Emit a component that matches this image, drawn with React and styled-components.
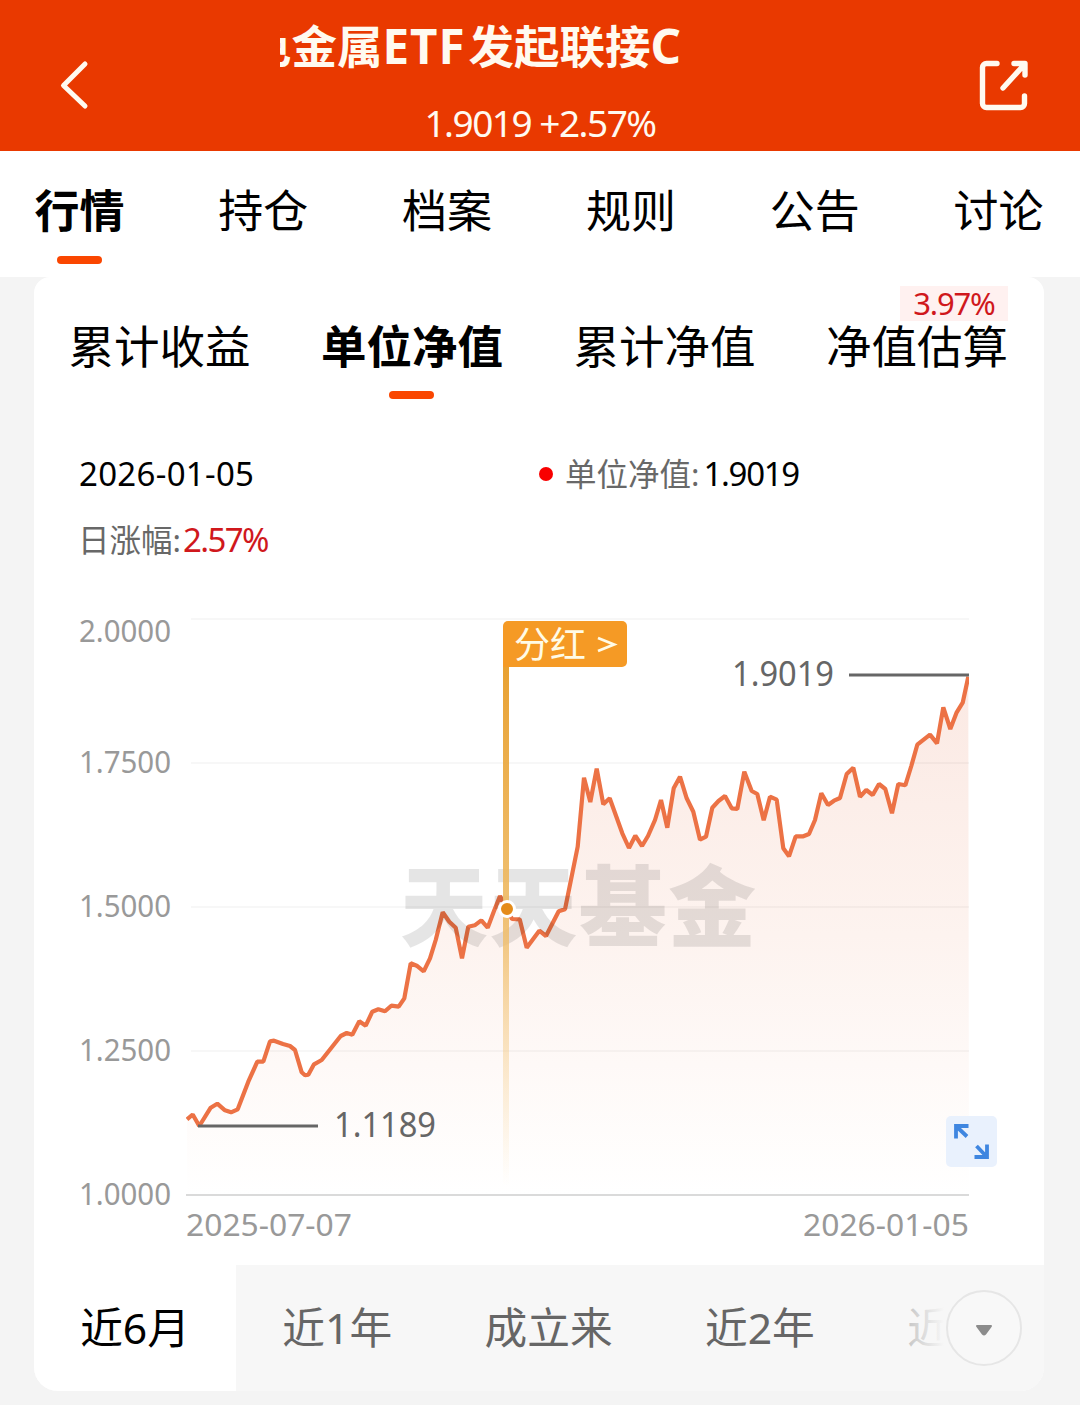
import React, { useState } from 'react';
import styled, { createGlobalStyle, css } from 'styled-components';

const GlobalStyle = createGlobalStyle`
  * {
    box-sizing: border-box;
  }

  body {
    margin: 0;
    background: #f4f4f4;
    font-family: 'Noto Sans', 'Noto Sans CJK SC', sans-serif;
    color: #000;
  }

  button {
    border: none;
    background: transparent;
    padding: 0;
    font: inherit;
    color: inherit;
  }
`;

const Page = styled.div`
  width: 1080px;
  height: 1405px;
  overflow: hidden;
`;

const Header = styled.header`
  display: grid;
  grid-template-columns: 280px 520px 1fr;
  height: 151px;
  background: #e93900;
  color: #fffaf0;
`;

const BackButton = styled.button`
  display: flex;
  align-items: center;
  padding: 18px 0 0 58px;
`;

const ShareButton = styled.button`
  display: flex;
  align-items: center;
  justify-content: flex-end;
  padding: 18px 50px 0 0;
`;

const HeaderCenter = styled.div`
  display: flex;
  flex-direction: column;
  align-items: center;
  padding-top: 16px;
`;

const FundName = styled.h1`
  display: flex;
  align-self: flex-start;
  justify-content: flex-end;
  width: 401px;
  height: 60px;
  margin: 0;
  overflow: hidden;
  font-size: 45.5px;
  font-weight: 700;
  line-height: 60px;
  white-space: nowrap;
`;

const Latin = styled.span`
  margin-right: ${props => props.$gap || 0}px;
  font-size: 47.5px;
  letter-spacing: ${props => props.$spacing || 0}px;
`;

const FundPrice = styled.div`
  margin-top: 22px;
  font-size: 37px;
  line-height: 50px;
  letter-spacing: -1.5px;
  white-space: nowrap;
`;

const TabBar = styled.nav`
  display: flex;
  justify-content: space-between;
  height: 126px;
  padding: 28px 36.5px 0 34.5px;
  background: #fff;
`;

const Tab = styled.button`
  position: relative;
  display: flex;
  flex-direction: column;
  align-items: center;
  font-size: ${props => props.$size}px;
  font-weight: ${props => props.$active ? 700 : 400};
  line-height: 64px;
  white-space: nowrap;

  ${props => props.$active && css`
    &::after {
      content: '';
      width: 45px;
      height: 8px;
      margin-top: 13px;
      border-radius: 4px;
      background: #fa4600;
    }
  `}
`;

const Card = styled.main`
  width: 1010px;
  height: 1114px;
  margin-left: 34px;
  border-radius: 16px 16px 24px 24px;
  background: #fff;
  overflow: hidden;
`;

const SubTabBar = styled.nav`
  display: flex;
  justify-content: space-between;
  height: 163px;
  padding: 36.5px 36px 0 34.5px;
`;

const Badge = styled.span`
  position: absolute;
  top: -28px;
  right: 0;
  width: 108px;
  height: 35px;
  background: #fff1f0;
  color: #d0181c;
  font-size: 31px;
  font-weight: 400;
  line-height: 34px;
  letter-spacing: -1.2px;
  text-align: center;
`;

const Info = styled.section`
  display: grid;
  grid-template-columns: 460px 1fr;
  grid-auto-rows: 66px;
  height: 160px;
  padding: 1px 0 0 45px;
`;

const InfoItem = styled.div`
  display: flex;
  align-items: center;
  height: 66px;
  font-size: 32px;
  line-height: 66px;
`;

const InfoLabel = styled.span`
  margin-left: ${props => props.$shift || 0}px;
  color: #686868;
  font-size: 31.5px;
`;

const InfoValue = styled.span`
  margin-left: ${props => props.$gap || 0}px;
  color: ${props => props.$up ? '#d0181c' : '#000'};
  font-size: 33px;
  letter-spacing: ${props => props.$spacing}px;
`;

const Dot = styled.span`
  width: 14px;
  height: 14px;
  margin-right: 12px;
  border-radius: 50%;
  background: #f80000;
`;

const ChartSvg = styled.svg`
  display: block;
`;

const Watermark = styled.text`
  fill: #000;
  fill-opacity: 0.1;
  font-family: 'Noto Sans CJK SC', sans-serif;
  font-size: 88px;
  font-weight: 900;
`;

const AxisLabel = styled.text`
  fill: #999;
  font-size: 31px;
`;

const MarkLabel = styled.text`
  fill: #666;
  font-size: 34px;
`;

const FlagLabel = styled.text`
  fill: #fffbe6;
  font-size: 36px;
`;

const PeriodBar = styled.div`
  position: relative;
  display: flex;
  height: 126px;
  background: #f7f7f7;
`;

const Period = styled.button`
  flex: none;
  padding: 0 46.2px;
  background: ${props => props.$active ? '#fff' : 'transparent'};
  color: ${props => props.$active ? '#000' : '#666'};
  font-size: 42.7px;
  line-height: 124px;
  white-space: nowrap;
`;

const PeriodFade = styled.div`
  position: absolute;
  top: 0;
  right: 0;
  width: 150px;
  height: 126px;
  background: linear-gradient(to right, rgba(247, 247, 247, 0.55), #f7f7f7 50px);
`;

const MoreButton = styled.button`
  position: absolute;
  top: 25px;
  right: 22px;
  display: flex;
  align-items: center;
  justify-content: center;
  width: 76px;
  height: 76px;
  padding-top: 4px;
  border: 2px solid #e6e6e6;
  border-radius: 50%;
  background: #f8f8f8;
`;

const tabs = ['行情', '持仓', '档案', '规则', '公告', '讨论'];

const subTabs = [
  { name: '累计收益' },
  { name: '单位净值' },
  { name: '累计净值' },
  { name: '净值估算', badge: '3.97%' },
];

const periods = ['近6月', '近1年', '成立来', '近2年', '近3年'];

const yLabels = [
  { value: '2.0000', y: 619, textY: 642 },
  { value: '1.7500', y: 763, textY: 773 },
  { value: '1.5000', y: 907, textY: 917 },
  { value: '1.2500', y: 1051, textY: 1061 },
  { value: '1.0000', y: 1195, textY: 1205 },
];

const points = [
  [187, 1119.5], [192.7, 1114.5], [199.3, 1126], [210.7, 1107.7], [217.3, 1103.7],
  [225, 1110.3], [231, 1112.3], [237.7, 1109.3], [248.3, 1081.7], [257.3, 1061.7],
  [263.3, 1061.7], [270, 1041.3], [274, 1040.7], [283, 1044], [290, 1046],
  [295, 1050], [301.7, 1072.3], [305, 1075.3], [308.3, 1074.7], [314, 1064.3],
  [321.7, 1060], [340.7, 1036], [346.7, 1033], [352.3, 1034.7], [359.3, 1021.3],
  [365.7, 1025.7], [372.3, 1011.7], [378.3, 1009.3], [385, 1011.3], [391.3, 1005.7],
  [398.7, 1006.7], [404.3, 998.3], [410.7, 963.3], [416.7, 965.7], [423.7, 971.3],
  [430, 958.3], [435.7, 940], [442.7, 912.3], [449.3, 921.7], [455.7, 927.7],
  [462, 958.3], [468.3, 926.7], [474.7, 925.3], [481.3, 920.3], [487.7, 927.7],
  [494, 911], [500, 896], [506.7, 909], [512, 919], [519.7, 919.3],
  [526.7, 947.7], [539.3, 930.7], [546, 936], [558.7, 911.3], [565, 909.3],
  [577.7, 846.7], [584, 777.7], [590.3, 802], [596.7, 768.7], [603.3, 804.3],
  [609.7, 798.3], [622.3, 833.3], [629, 848], [635.3, 835.7], [642, 846],
  [648, 836], [655, 820], [661, 800], [667.3, 827.7], [673.7, 788.3],
  [680, 776.7], [686.7, 798.3], [693.3, 811.7], [700, 839.7], [706, 836.7],
  [712.3, 807.7], [718.5, 801], [725, 796], [731.7, 808.3], [737.3, 809],
  [744.3, 771.7], [751.7, 791], [757.3, 794], [763.7, 820.3], [770, 796.7],
  [776.7, 799.7], [783.3, 848.3], [789, 856.3], [795.7, 836.3], [803.3, 836.3],
  [809, 834], [815, 820], [821.3, 793.3], [828, 805], [834, 800.7],
  [840, 798], [846.7, 774], [853.3, 767.7], [860, 796.7], [866.3, 790],
  [872.7, 795], [879, 784], [885.3, 789], [892, 813.3], [898.3, 784],
  [905.3, 785.3], [911.3, 766], [917.3, 744.7], [930, 734.7], [937, 743.3],
  [943.3, 707.3], [950.3, 729], [956.7, 712.3], [962.7, 702.7], [968.3, 676.7],
];

const linePoints = points.map(p => p.join(',')).join(' ');
const areaPoints = `187,1194 ${linePoints} 969,1194`;

const Chart = () => (
  <ChartSvg width="1010" height="665" viewBox="34 600 1010 665">
    <defs>
      <linearGradient id="area" gradientUnits="userSpaceOnUse" x1="0" y1="676" x2="0" y2="1194">
        <stop offset="0" stopColor="#fbe9e3" />
        <stop offset="0.5" stopColor="#fdf3ef" />
        <stop offset="1" stopColor="#fff" />
      </linearGradient>
      <linearGradient id="pole" gradientUnits="userSpaceOnUse" x1="0" y1="660" x2="0" y2="1186">
        <stop offset="0" stopColor="#e8a030" />
        <stop offset="0.5" stopColor="#efbc68" stopOpacity="0.9" />
        <stop offset="1" stopColor="#fbd9a0" stopOpacity="0" />
      </linearGradient>
      <clipPath id="plot">
        <rect x="186" y="600" width="783" height="596" />
      </clipPath>
    </defs>

    <polygon points={areaPoints} fill="url(#area)" />
    {yLabels.map(label => (
      <React.Fragment key={label.value}>
        <line
          x1={label.y === 1195 ? 186 : 191}
          x2="969"
          y1={label.y}
          y2={label.y}
          stroke={label.y === 1195 ? '#dadada' : '#000'}
          strokeOpacity={label.y === 1195 ? 1 : 0.03}
          strokeWidth="2"
        />
        <AxisLabel x="79" y={label.textY} textLength="92" lengthAdjust="spacingAndGlyphs">{label.value}</AxisLabel>
      </React.Fragment>
    ))}
    <AxisLabel x="186" y="1236" textLength="166" lengthAdjust="spacingAndGlyphs">2025-07-07</AxisLabel>
    <AxisLabel x="803" y="1236" textLength="166" lengthAdjust="spacingAndGlyphs">2026-01-05</AxisLabel>

    <polyline
      points={linePoints}
      fill="none"
      stroke="#ec7245"
      strokeWidth="4.2"
      strokeLinejoin="bevel"
      clipPath="url(#plot)"
    />
    <Watermark x="400" y="939" textLength="356">天天基金</Watermark>

    <line x1="849" x2="969" y1="675" y2="675" stroke="#666" strokeWidth="3" />
    <MarkLabel x="732" y="686" textLength="102" lengthAdjust="spacingAndGlyphs">1.9019</MarkLabel>
    <line x1="198" x2="318" y1="1126" y2="1126" stroke="#666" strokeWidth="3" />
    <MarkLabel x="334" y="1137" textLength="102" lengthAdjust="spacingAndGlyphs">1.1189</MarkLabel>

    {/* dividend flag */}
    <rect x="503" y="660" width="6" height="526" fill="url(#pole)" />
    <path d="M503 667V626a5 5 0 0 1 5-5h114a5 5 0 0 1 5 5v36a5 5 0 0 1-5 5z" fill="#f59a25" />
    <FlagLabel x="514" y="658">分红</FlagLabel>
    <path d="M598 638l16 6.500-16 6.500" fill="none" stroke="#fffbe6" strokeWidth="2.800" />
    <circle cx="507" cy="909" r="7.5" fill="#e58c1a" stroke="#fff" strokeWidth="3" />

    {/* fullscreen */}
    <rect x="946" y="1116" width="51" height="51" rx="5" fill="#e9f1fd" />
    <g fill="none" stroke="#3f86e0" strokeWidth="3.8">
      <path d="M968.500 1126H956v12.500M956.500 1126.500l10.500 10" />
      <path d="M974.500 1157h12.500V1144.500M986.500 1156.500l-10-10.500" />
    </g>
  </ChartSvg>
);

const App = () => {
  const [tab, setTab] = useState('行情');
  const [subTab, setSubTab] = useState('单位净值');
  const [period, setPeriod] = useState('近6月');

  return (
    <Page>
      <GlobalStyle />
      <Header>
        <BackButton aria-label="back">
          <svg width="32" height="52" viewBox="0 0 32 52" fill="none" stroke="currentColor" strokeWidth="5" strokeLinecap="round" strokeLinejoin="round">
            <path d="M27 5L5.500 26.500 27 47" />
          </svg>
        </BackButton>
        <HeaderCenter>
          <FundName>有色金属<Latin $spacing={1} $gap={3}>ETF</Latin>发起联接<Latin>C</Latin></FundName>
          <FundPrice>1.9019 +2.57%</FundPrice>
        </HeaderCenter>
        <ShareButton aria-label="share">
          <svg width="52" height="52" viewBox="0 0 52 52" fill="none" stroke="currentColor" strokeWidth="5.4" strokeLinecap="round" strokeLinejoin="round">
            <path d="M19 4.500H8.500a4 4 0 0 0-4 4v36a4 4 0 0 0 4 4h34a4 4 0 0 0 4-4V37" />
            <path d="M36 4.500h11V16M46.500 5.500L25 29" />
          </svg>
        </ShareButton>
      </Header>

      <TabBar>
        {tabs.map(name => (
          <Tab key={name} $size={45} $active={name === tab} onClick={() => setTab(name)}>{name}</Tab>
        ))}
      </TabBar>

      <Card>
        <SubTabBar>
          {subTabs.map(({ name, badge }) => (
            <Tab key={name} $size={45.5} $active={name === subTab} onClick={() => setSubTab(name)}>
              {name}
              {badge && <Badge>{badge}</Badge>}
            </Tab>
          ))}
        </SubTabBar>

        <Info>
          <InfoItem>
            <InfoValue $spacing={0.3}>2026-01-05</InfoValue>
          </InfoItem>
          <InfoItem>
            <Dot />
            <InfoLabel>单位净值:</InfoLabel>
            <InfoValue $gap={4} $spacing={-1.3}>1.9019</InfoValue>
          </InfoItem>
          <InfoItem>
            <InfoLabel $shift={-1}>日涨幅:</InfoLabel>
            <InfoValue $up $gap={2} $spacing={-1.6}>2.57%</InfoValue>
          </InfoItem>
        </Info>

        <Chart />

        <PeriodBar>
          {periods.map(name => (
            <Period key={name} $active={name === period} onClick={() => setPeriod(name)}>{name}</Period>
          ))}
          <PeriodFade />
          <MoreButton aria-label="more">
            <svg width="18" height="12" viewBox="0 0 18 12">
              <path d="M2 1h14a1 1 0 0 1 .7 1.700L11 10.500a3 3 0 0 1-4 0L1.300 2.700A1 1 0 0 1 2 1z" fill="#8c8c8c" />
            </svg>
          </MoreButton>
        </PeriodBar>
      </Card>
    </Page>
  );
}

export default App;
